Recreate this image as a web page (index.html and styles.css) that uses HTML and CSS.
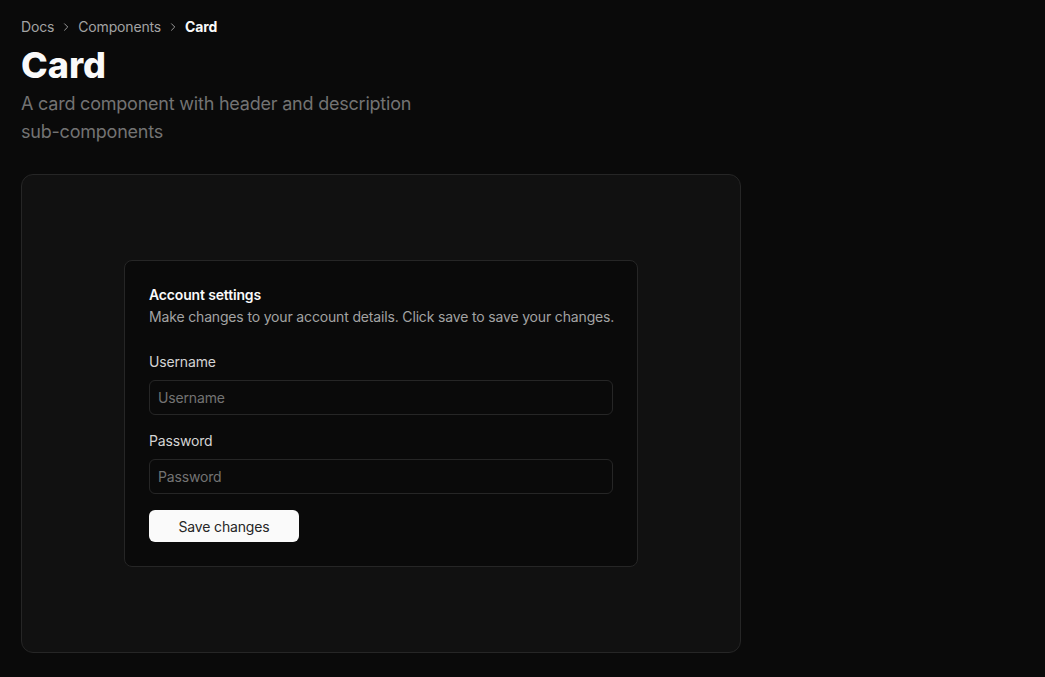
FILE: index.html
```html
<!DOCTYPE html>
<html lang="en">
<head>
<meta charset="utf-8">
<title>Card</title>
<link rel="stylesheet" href="styles.css">
</head>
<body>
<main class="page">
  <nav class="crumbs">
    <span class="crumb">Docs</span>
    <svg class="chev" viewBox="0 0 24 24" width="14" height="14"><path d="M9.5 6.5l5.5 5.5-5.5 5.5" fill="none" stroke="currentColor" stroke-width="1.6" stroke-linecap="round" stroke-linejoin="round"/></svg>
    <span class="crumb">Components</span>
    <svg class="chev" viewBox="0 0 24 24" width="14" height="14"><path d="M9.5 6.5l5.5 5.5-5.5 5.5" fill="none" stroke="currentColor" stroke-width="1.6" stroke-linecap="round" stroke-linejoin="round"/></svg>
    <span class="crumb current">Card</span>
  </nav>
  <h1 class="title">Card</h1>
  <p class="lead">A card component with header and description sub-components</p>

  <section class="preview">
    <div class="card">
      <div class="card-head">
        <h3 class="card-title">Account settings</h3>
        <p class="card-desc">Make changes to your account details. Click save to save your changes.</p>
      </div>
      <div class="form">
        <label class="field">
          <span class="label">Username</span>
          <input class="input" type="text" placeholder="Username">
        </label>
        <label class="field">
          <span class="label">Password</span>
          <input class="input" type="password" placeholder="Password">
        </label>
        <button class="btn" type="button">Save changes</button>
      </div>
    </div>
  </section>
</main>
</body>
</html>
```
FILE: styles.css
```css
* { box-sizing: border-box; }
html, body { margin: 0; padding: 0; }
body {
  background: #0a0a0a;
  color: #fafafa;
  font-family: Inter, "Noto Sans", sans-serif;
  letter-spacing: -0.01em;
}
.page {
  padding: 17px 21px 0;
  width: 761px;
}
.crumbs {
  display: flex;
  align-items: center;
  gap: 5px;
  height: 20px;
  font-size: 14px;
  line-height: 20px;
}
.crumb { color: #a3a3a3; }
.crumb.current { color: #fafafa; font-weight: 700; }
.chev { color: #a3a3a3; flex: none; }
.title {
  margin: 8px 0 0;
  font-size: 36px;
  line-height: 40px;
  font-weight: 800;
  letter-spacing: 0;
}
.lead {
  margin: 5px 0 0;
  max-width: 420px;
  font-size: 18px;
  line-height: 28px;
  letter-spacing: -0.012em;
  color: #737373;
}
.preview {
  margin-top: 28px;
  height: 479px;
  width: 720px;
  border: 1px solid #262626;
  border-radius: 12px;
  background: #111111;
  display: flex;
  align-items: center;
  justify-content: center;
}
.card {
  width: 514px;
  background: #0a0a0a;
  border: 1px solid #262626;
  border-radius: 8px;
  padding: 24px;
}
.card-head { display: flex; flex-direction: column; gap: 2px; }
.card-title {
  margin: 0;
  font-size: 14px;
  line-height: 20px;
  font-weight: 600;
  color: #fafafa;
}
.card-desc {
  margin: 0;
  font-size: 14px;
  line-height: 20px;
  color: #a3a3a3;
  white-space: nowrap;
}
.form {
  margin-top: 25px;
  display: flex;
  flex-direction: column;
  gap: 16px;
  align-items: flex-start;
}
.field {
  display: flex;
  flex-direction: column;
  gap: 8px;
  width: 100%;
}
.label {
  font-size: 14px;
  line-height: 20px;
  color: #d4d4d4;
}
.input {
  height: 35px;
  width: 100%;
  background: transparent;
  border: 1px solid #262626;
  border-radius: 6px;
  padding: 0 8px;
  font-family: inherit;
  letter-spacing: inherit;
  font-size: 14px;
  color: #fafafa;
  outline: none;
}
.input::placeholder { color: #737373; }
.btn {
  height: 32px;
  width: 150px;
  background: #fafafa;
  color: #262626;
  border: none;
  border-radius: 6px;
  font-family: inherit;
  letter-spacing: inherit;
  font-size: 14px;
  font-weight: 400;
  cursor: pointer;
}
```
